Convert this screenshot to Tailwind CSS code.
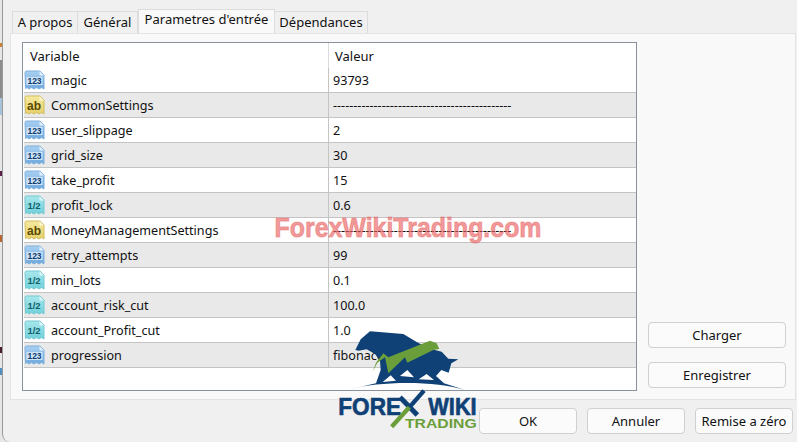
<!DOCTYPE html>
<html>
  <head>
    <title>Parametres d'entrée</title>
    <script src="https://cdn.jsdelivr.net/npm/@tailwindcss/browser@4"></script>
  </head>
  <body class="bg-[#e6e6e6] overflow-hidden">
    <!-- shared list icons: the label is written in each row -->
    <svg class="absolute w-0 h-0">
      <linearGradient id="g-num" x1="0" y1="0" x2="0" y2="1"><stop offset="0" stop-color="#a9d0f2"/><stop offset="1" stop-color="#6fa8de"/></linearGradient>
      <linearGradient id="g-str" x1="0" y1="0" x2="0" y2="1"><stop offset="0" stop-color="#f6ea9f"/><stop offset="1" stop-color="#e6d06c"/></linearGradient>
      <linearGradient id="g-dbl" x1="0" y1="0" x2="0" y2="1"><stop offset="0" stop-color="#a8e8ec"/><stop offset="1" stop-color="#70d0da"/></linearGradient>
      <symbol id="ico-num" viewBox="0 0 21 21">
        <path d="M1 2.500q0-1.500 1.500-1.500h13.500l4 4v14l-2.500-1.500-2.500 1.500-2.500-1.500-2.500 1.500-2.500-1.500-2.500 1.500-2-1.500-1.500 1z" fill="url(#g-num)" stroke="#7fb0dc"/>
        <path d="M15.500 1v4.500h4.500z" fill="#e4f0fb"/>
        <rect x="2.500" y="7" width="16" height="8" fill="#cfe3f6"/>
      </symbol>
      <symbol id="ico-str" viewBox="0 0 21 21">
        <path d="M1 2.500q0-1.500 1.500-1.500h13.500l4 4v14l-2.500-1.500-2.500 1.500-2.500-1.500-2.500 1.500-2.500-1.500-2.500 1.500-2-1.500-1.500 1z" fill="url(#g-str)" stroke="#d2bd5c"/>
        <path d="M15.500 1v4.500h4.500z" fill="#fcf6d2"/>
      </symbol>
      <symbol id="ico-dbl" viewBox="0 0 21 21">
        <path d="M1 2.500q0-1.500 1.500-1.500h13.500l4 4v14l-2.500-1.500-2.500 1.500-2.500-1.500-2.500 1.500-2.500-1.500-2.500 1.500-2-1.500-1.500 1z" fill="url(#g-dbl)" stroke="#74c8d2"/>
        <path d="M15.500 1v4.500h4.500z" fill="#dff6f8"/>
      </symbol>
    </svg>

    <div class="relative ml-[2px] h-[442px] rounded-bl-[8px] border-l border-[#9a9a9a] bg-[#f0f0f0] pl-[7px] pr-[1px] pt-[9px] text-[13px] text-[#111] font-['Noto_Sans','Open_Sans',sans-serif]">
      <!-- tabs -->
      <div class="flex items-end h-[24px] pl-[2px] relative z-10">
        <div class="w-[66px] h-[22px] bg-[#f0f0f0] border border-b-0 border-[#dcdcdc] flex items-center justify-center">A propos</div>
        <div class="w-[60px] h-[22px] bg-[#f0f0f0] border border-l-0 border-b-0 border-[#dcdcdc] flex items-center justify-center">Général</div>
        <div class="w-[137px] h-[24px] bg-[#f9f9f9] border border-b-0 border-[#dcdcdc] flex items-center justify-center pb-[3px]">Parametres d'entrée</div>
        <div class="w-[93px] h-[22px] bg-[#f0f0f0] border border-l-0 border-b-0 border-[#dcdcdc] flex items-center justify-center">Dépendances</div>
      </div>

      <!-- panel -->
      <div class="h-[367px] bg-[#f9f9f9] border border-[#e4e4e4] pl-[11px] pr-[8px] pt-[8px] flex">
        <div class="w-[615px] h-[349px] bg-white border border-[#8a9099] pl-[1px] flex flex-col text-[12.6px]">
          <div class="flex h-[25px] shrink-0 items-center text-[13px]">
            <div class="w-[305px] border-r border-[#dcdcdc] h-full pl-[6px] pt-[2px] flex items-center">Variable</div>
            <div class="pl-[6px] pt-[2px]">Valeur</div>
          </div>
          <div class="flex h-[25px] shrink-0 border-b border-[#c4c4c4] items-center">
            <div class="w-[305px] border-r border-[#c4c4c4] h-full flex items-center gap-[6px]"><svg class="w-[21px] h-[21px]"><use href="#ico-num"/><text x="10.500" y="14" text-anchor="middle" font-size="8.500" font-weight="700" font-family="Liberation Sans" fill="#0c3a70">123</text></svg><span class="pt-[2px]">magic</span></div>
            <div class="pl-[4px] pt-[2px]">93793</div>
          </div>
          <div class="flex h-[25px] shrink-0 border-b border-[#c4c4c4] bg-[#e9e9e9] items-center">
            <div class="w-[305px] border-r border-[#c4c4c4] h-full flex items-center gap-[6px]"><svg class="w-[21px] h-[21px]"><use href="#ico-str"/><text x="10" y="15" text-anchor="middle" font-size="12" font-weight="700" font-family="Liberation Sans" fill="#5a4a00">ab</text></svg><span class="pt-[2px]">CommonSettings</span></div>
            <div class="pl-[4px] pt-[2px]">--------------------------------------------</div>
          </div>
          <div class="flex h-[25px] shrink-0 border-b border-[#c4c4c4] items-center">
            <div class="w-[305px] border-r border-[#c4c4c4] h-full flex items-center gap-[6px]"><svg class="w-[21px] h-[21px]"><use href="#ico-num"/><text x="10.500" y="14" text-anchor="middle" font-size="8.500" font-weight="700" font-family="Liberation Sans" fill="#0c3a70">123</text></svg><span class="pt-[2px]">user_slippage</span></div>
            <div class="pl-[4px] pt-[2px]">2</div>
          </div>
          <div class="flex h-[25px] shrink-0 border-b border-[#c4c4c4] bg-[#e9e9e9] items-center">
            <div class="w-[305px] border-r border-[#c4c4c4] h-full flex items-center gap-[6px]"><svg class="w-[21px] h-[21px]"><use href="#ico-num"/><text x="10.500" y="14" text-anchor="middle" font-size="8.500" font-weight="700" font-family="Liberation Sans" fill="#0c3a70">123</text></svg><span class="pt-[2px]">grid_size</span></div>
            <div class="pl-[4px] pt-[2px]">30</div>
          </div>
          <div class="flex h-[25px] shrink-0 border-b border-[#c4c4c4] items-center">
            <div class="w-[305px] border-r border-[#c4c4c4] h-full flex items-center gap-[6px]"><svg class="w-[21px] h-[21px]"><use href="#ico-num"/><text x="10.500" y="14" text-anchor="middle" font-size="8.500" font-weight="700" font-family="Liberation Sans" fill="#0c3a70">123</text></svg><span class="pt-[2px]">take_profit</span></div>
            <div class="pl-[4px] pt-[2px]">15</div>
          </div>
          <div class="flex h-[25px] shrink-0 border-b border-[#c4c4c4] bg-[#e9e9e9] items-center">
            <div class="w-[305px] border-r border-[#c4c4c4] h-full flex items-center gap-[6px]"><svg class="w-[21px] h-[21px]"><use href="#ico-dbl"/><text x="10" y="14" text-anchor="middle" font-size="9.500" font-weight="700" font-family="Liberation Sans" fill="#125f6c">1/2</text></svg><span class="pt-[2px]">profit_lock</span></div>
            <div class="pl-[4px] pt-[2px]">0.6</div>
          </div>
          <div class="flex h-[25px] shrink-0 border-b border-[#c4c4c4] items-center">
            <div class="w-[305px] border-r border-[#c4c4c4] h-full flex items-center gap-[6px]"><svg class="w-[21px] h-[21px]"><use href="#ico-str"/><text x="10" y="15" text-anchor="middle" font-size="12" font-weight="700" font-family="Liberation Sans" fill="#5a4a00">ab</text></svg><span class="pt-[2px]">MoneyManagementSettings</span></div>
            <div class="pl-[4px] pt-[2px]">--------------------------------------------</div>
          </div>
          <div class="flex h-[25px] shrink-0 border-b border-[#c4c4c4] bg-[#e9e9e9] items-center">
            <div class="w-[305px] border-r border-[#c4c4c4] h-full flex items-center gap-[6px]"><svg class="w-[21px] h-[21px]"><use href="#ico-num"/><text x="10.500" y="14" text-anchor="middle" font-size="8.500" font-weight="700" font-family="Liberation Sans" fill="#0c3a70">123</text></svg><span class="pt-[2px]">retry_attempts</span></div>
            <div class="pl-[4px] pt-[2px]">99</div>
          </div>
          <div class="flex h-[25px] shrink-0 border-b border-[#c4c4c4] items-center">
            <div class="w-[305px] border-r border-[#c4c4c4] h-full flex items-center gap-[6px]"><svg class="w-[21px] h-[21px]"><use href="#ico-dbl"/><text x="10" y="14" text-anchor="middle" font-size="9.500" font-weight="700" font-family="Liberation Sans" fill="#125f6c">1/2</text></svg><span class="pt-[2px]">min_lots</span></div>
            <div class="pl-[4px] pt-[2px]">0.1</div>
          </div>
          <div class="flex h-[25px] shrink-0 border-b border-[#c4c4c4] bg-[#e9e9e9] items-center">
            <div class="w-[305px] border-r border-[#c4c4c4] h-full flex items-center gap-[6px]"><svg class="w-[21px] h-[21px]"><use href="#ico-dbl"/><text x="10" y="14" text-anchor="middle" font-size="9.500" font-weight="700" font-family="Liberation Sans" fill="#125f6c">1/2</text></svg><span class="pt-[2px]">account_risk_cut</span></div>
            <div class="pl-[4px] pt-[2px]">100.0</div>
          </div>
          <div class="flex h-[25px] shrink-0 border-b border-[#c4c4c4] items-center">
            <div class="w-[305px] border-r border-[#c4c4c4] h-full flex items-center gap-[6px]"><svg class="w-[21px] h-[21px]"><use href="#ico-dbl"/><text x="10" y="14" text-anchor="middle" font-size="9.500" font-weight="700" font-family="Liberation Sans" fill="#125f6c">1/2</text></svg><span class="pt-[2px]">account_Profit_cut</span></div>
            <div class="pl-[4px] pt-[2px]">1.0</div>
          </div>
          <div class="flex h-[25px] shrink-0 border-b border-[#c4c4c4] bg-[#e9e9e9] items-center">
            <div class="w-[305px] border-r border-[#c4c4c4] h-full flex items-center gap-[6px]"><svg class="w-[21px] h-[21px]"><use href="#ico-num"/><text x="10.500" y="14" text-anchor="middle" font-size="8.500" font-weight="700" font-family="Liberation Sans" fill="#0c3a70">123</text></svg><span class="pt-[2px]">progression</span></div>
            <div class="pl-[4px] pt-[2px]">fibonacci</div>
          </div>
        </div>

        <div class="ml-[11px] w-[138px] pt-[280px] flex flex-col gap-[14px]">
          <button class="h-[26px] pt-[1px] rounded-[4px] bg-[#fbfbfb] border border-[#d0d0d0]">Charger</button>
          <button class="h-[26px] pt-[1px] rounded-[4px] bg-[#fbfbfb] border border-[#d0d0d0]">Enregistrer</button>
        </div>
      </div>

      <!-- footer buttons -->
      <div class="flex justify-end gap-[10px] pt-[8px] pr-[3px]">
        <button class="w-[98px] h-[26px] pt-[1px] rounded-[4px] bg-[#fbfbfb] border border-[#d0d0d0]">OK</button>
        <button class="w-[98px] h-[26px] pt-[1px] rounded-[4px] bg-[#fbfbfb] border border-[#d0d0d0]">Annuler</button>
        <button class="w-[98px] h-[26px] pt-[1px] rounded-[4px] bg-[#fbfbfb] border border-[#d0d0d0]">Remise a zéro</button>
      </div>
    </div>

    <!-- bits of the window behind, showing at the left edge -->
    <div class="absolute left-0 top-[60px] w-[2px] h-[55px] bg-[#8c8c8c]"></div>
    <div class="absolute left-0 top-[98px] w-[2px] h-[17px] bg-[#a9c2dc]"></div>
    <div class="absolute left-0 top-[43px] w-[2px] h-[4px] bg-[#c8812e]"></div>
    <div class="absolute left-0 top-[171px] w-[2px] h-[5px] bg-[#5a1f4a]"></div>
    <div class="absolute left-0 top-[235px] w-[2px] h-[7px] bg-[#b5692e]"></div>
    <div class="absolute left-0 top-[347px] w-[2px] h-[6px] bg-[#4a2030]"></div>
    <div class="absolute left-0 top-[368px] w-[2px] h-[7px] bg-[#4f8fc0]"></div>

    <!-- watermark -->
    <div class="absolute left-[274px] top-[212px] w-[268px] h-[32px] flex items-center justify-center pointer-events-none">
      <span class="text-[28px] leading-none font-bold whitespace-nowrap scale-x-[.89] text-[#e85f5f]/65 [-webkit-text-stroke:1.200px_#e8606066] font-['Liberation_Sans',sans-serif]">ForexWikiTrading.com</span>
    </div>

    <!-- logo -->
    <svg class="absolute left-[320px] top-[320px] w-[200px] h-[122px]" viewBox="0 0 600 366">
      <path d="M106 90 122 58 150 34 205 38 250 42 290 66 325 85 365 95 385 116 415 118 394 130 386 158 364 150 348 168 372 190 435 210C350 182 180 182 90 208L168 190 182 150 180 122 165 102 140 88 116 92z" fill="#0f4176"/>
      <path d="M188 186 212 166 228 182zM296 178 320 162 342 180zM240 168 262 150 282 172z" fill="#fff"/>
      <path d="M158 155 168 128 190 100 205 112 330 62 350 70 358 87 340 90 262 128 255 112 205 160 195 112 172 128z" fill="#6a9e3a"/>
      <text x="55" y="285" font-family="Liberation Sans" font-weight="700" font-size="74" textLength="188" lengthAdjust="spacingAndGlyphs" fill="#0f4176" stroke="#0f4176" stroke-width="2">FORE</text>
      <path d="M240 232 292 285" stroke="#0f4176" stroke-width="15"/>
      <path d="M312 212 268 262" stroke="#0f4176" stroke-width="13"/>
      <path d="M268 262 215 320" stroke="#6a9e3a" stroke-width="13"/>
      <text x="325" y="285" font-family="Liberation Sans" font-weight="700" font-size="74" textLength="145" lengthAdjust="spacingAndGlyphs" fill="#0f4176" stroke="#0f4176" stroke-width="2">WIKI</text>
      <text x="255" y="325" font-family="Liberation Sans" font-weight="700" font-size="38" textLength="215" lengthAdjust="spacingAndGlyphs" fill="#6a9e3a">TRADING</text>
    </svg>
  </body>
</html>
